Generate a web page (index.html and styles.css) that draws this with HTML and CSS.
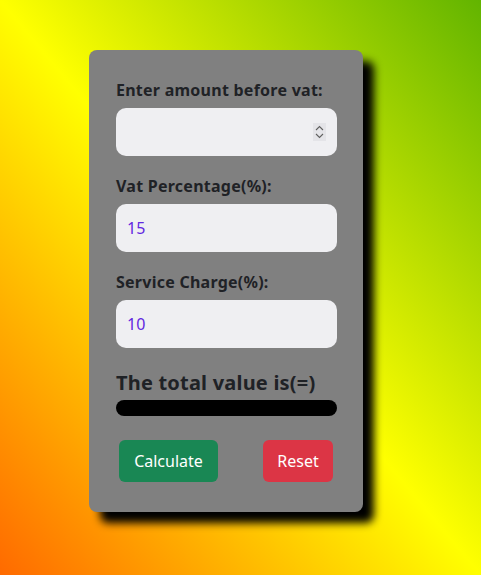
FILE: index.html
```html
<!DOCTYPE html>
<html lang="en">
<head>
<meta charset="utf-8">
<title>VAT Calculator</title>
<link rel="stylesheet" href="styles.css">
</head>
<body>
<main class="page">
  <form class="card">
    <div class="group">
      <label class="label" for="amount">Enter amount before vat:</label>
      <div class="field-wrap">
        <input class="field" id="amount" type="text" value="">
        <svg class="spin" width="13" height="18" viewBox="0 0 13 18" aria-hidden="true">
          <rect x="0" y="0" width="13" height="18" fill="#e4e4e8"/>
          <path d="M3 7 L6.5 3.5 L10 7" fill="none" stroke="#606060" stroke-width="1.1"/>
          <path d="M3 11 L6.5 14.5 L10 11" fill="none" stroke="#606060" stroke-width="1.1"/>
        </svg>
      </div>
    </div>
    <div class="group">
      <label class="label" for="vat">Vat Percentage(%):</label>
      <input class="field" id="vat" type="text" value="15">
    </div>
    <div class="group">
      <label class="label" for="svc">Service Charge(%):</label>
      <input class="field" id="svc" type="text" value="10">
    </div>
    <h2 class="total">The total value is(=)</h2>
    <div class="result"></div>
    <div class="actions">
      <button type="button" class="btn btn-green">Calculate</button>
      <button type="reset" class="btn btn-red">Reset</button>
    </div>
  </form>
</main>
</body>
</html>
```
FILE: styles.css
```css
* { box-sizing: border-box; }
html, body { margin: 0; height: 100%; }
body {
  background: linear-gradient(to top right, #ff6a00 0%, #ffff00 50%, #62b400 100%);
  font-family: "Noto Sans", "Open Sans", sans-serif;
  color: #212529;
}
.page {
  padding: 50px 0 0 89px;
}
.card {
  width: 274px;
  background: #808080;
  border-radius: 8px;
  box-shadow: 11px 11px 8px #000;
  padding: 28px 26px 30px 27px;
}
.group { margin-bottom: 18px; }
.label {
  display: block;
  font-weight: 700;
  font-size: 16px;
  line-height: 24px;
  margin-bottom: 6px;
  letter-spacing: 0.25px;
  color: #1f2226;
}
.field-wrap { position: relative; }
.field {
  display: block;
  width: 100%;
  height: 48px;
  border: none;
  border-radius: 10px;
  background: #efeff2;
  padding: 0 11px;
  font-family: inherit;
  font-size: 16px;
  color: #6228e0;
  outline: none;
}
.spin {
  position: absolute;
  right: 11px;
  top: 15px;
}
.total {
  margin: 23px 0 5px;
  font-size: 20px;
  line-height: 24px;
  font-weight: 700;
  letter-spacing: 0.2px;
  color: #1f2226;
}
.result {
  height: 16px;
  background: #000;
  border-radius: 8px;
}
.actions {
  display: flex;
  justify-content: space-between;
  margin-top: 24px;
  padding: 0 4px 0 3px;
}
.btn {
  height: 42px;
  border: none;
  border-radius: 6px;
  color: #fff;
  font-family: inherit;
  font-size: 16px;
  padding: 0 10px;
}
.btn-green { background: #198754; width: 99px; }
.btn-red { background: #dc3545; width: 70px; }
```
